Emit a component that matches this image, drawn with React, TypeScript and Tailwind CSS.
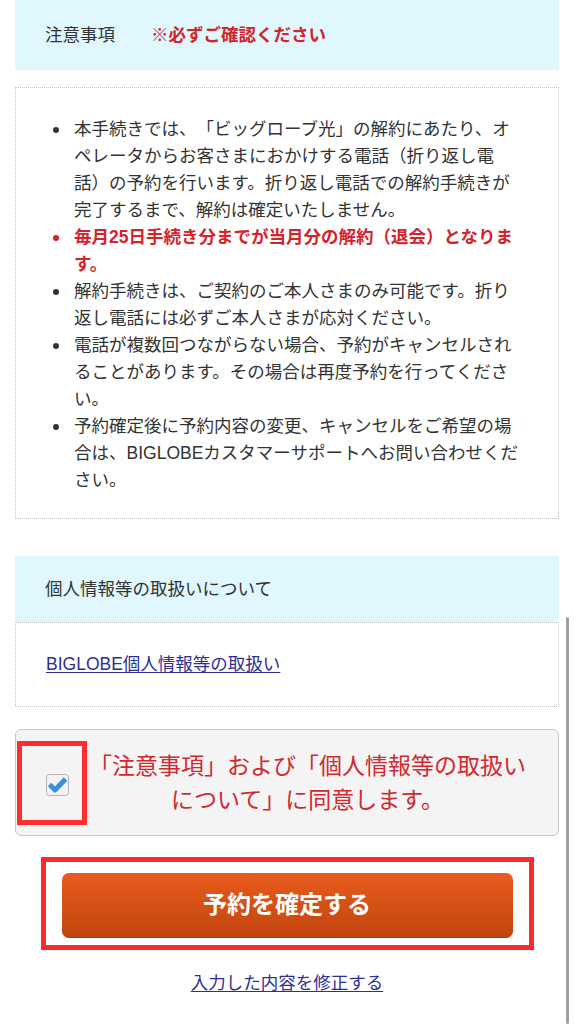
import React from 'react'

const notes: { text: string; strong?: boolean }[] = [
    {
        text: '本手続きでは、「ビッグローブ光」の解約にあたり、オペレータからお客さまにおかけする電話（折り返し電話）の予約を行います。折り返し電話での解約手続きが完了するまで、解約は確定いたしません。',
    },
    { text: '毎月25日手続き分までが当月分の解約（退会）となります。', strong: true },
    { text: '解約手続きは、ご契約のご本人さまのみ可能です。折り返し電話には必ずご本人さまが応対ください。' },
    { text: '電話が複数回つながらない場合、予約がキャンセルされることがあります。その場合は再度予約を行ってください。' },
    {
        text: '予約確定後に予約内容の変更、キャンセルをご希望の場合は、BIGLOBEカスタマーサポートへお問い合わせください。',
    },
]

const CheckBox: React.FC = () => (
    <svg width="23" height="22" viewBox="0 0 23 22">
        <rect x="0.5" y="0.5" width="22" height="21" rx="3" fill="#f2f2f2" stroke="#b5b5b5" />
        <path d="M3.5 10.5 L9 16 L19.5 5" fill="none" stroke="#3a8fdc" strokeWidth="4.8" strokeLinejoin="round" />
    </svg>
)

export default function App() {
    return (
        <div className="relative min-h-[1024px] bg-white px-[15px] font-['Liberation_Sans','Noto_Sans_CJK_JP',sans-serif] text-[#333333] [text-spacing-trim:space-all]">

            {/* 注意事項 */}
            <div className="flex h-[70px] items-center bg-[#dff7fd] pl-[30px] text-[17.5px]">
                <span>注意事項</span>
                <span className="ml-[36px] font-bold text-[#d4232b]">※必ずご確認ください</span>
            </div>

            <div className="mt-[17px] border border-dotted border-[#c4c4c4] pt-[28px] pb-[24px] pl-[37px]">
                <ul className="text-[17.5px] leading-[27px]">
                    {notes.map((n, i) => (
                        <li key={i} className={'flex ' + (n.strong ? 'font-bold text-[#d4232b]' : '')}>
                            <span className="mt-[11px] mr-[15px] h-[6px] w-[6px] shrink-0 rounded-full bg-current" />
                            <span className="w-[446px]">{n.text}</span>
                        </li>
                    ))}
                </ul>
            </div>

            {/* 個人情報 */}
            <div className="mt-[37px] flex h-[66px] items-center bg-[#dff7fd] pl-[30px] text-[17.5px]">
                個人情報等の取扱いについて
            </div>
            <div className="flex h-[85px] items-center border border-dotted border-[#c4c4c4] pl-[30px] text-[17.5px]">
                <a href="#" className="text-[#2f2f93] underline underline-offset-2">
                    BIGLOBE個人情報等の取扱い
                </a>
            </div>

            {/* 同意 */}
            <div className="mt-[22px] flex h-[107px] items-center rounded-[6px] border border-[#c8c8c8] bg-[#f4f4f4]">
                <div className="ml-[1px] flex h-[84px] w-[70px] shrink-0 items-center border-[5px] border-[#ff2d2d] pl-[24px] pt-[5px]">
                    <CheckBox />
                </div>
                <p className="flex-1 pr-[30px] text-center text-[23px] leading-[34px] text-[#d2282e]">
                    「注意事項」および「個人情報等の取扱いについて」に同意します。
                </p>
            </div>

            {/* 確定ボタン */}
            <div className="mx-auto mt-[21px] w-[493px] border-[5px] border-[#ff2b2b] px-[16px] pt-[11px] pb-[7px]">
                <button className="flex h-[65px] w-full items-center justify-center rounded-[7px] border-b border-[#a63a0a] bg-gradient-to-b from-[#e95b1c] to-[#c1460f] text-[24px] font-bold text-white">
                    予約を確定する
                </button>
            </div>

            <div className="mt-[20px] text-center text-[17.5px] leading-[27px]">
                <a href="#" className="text-[#2f2f93] underline underline-offset-2">
                    入力した内容を修正する
                </a>
            </div>

            {/* scroll indicator */}
            <div className="absolute top-[617px] right-[5px] bottom-0 w-[3px] rounded-full bg-[#a0a0a0]" />
        </div>
    )
}
